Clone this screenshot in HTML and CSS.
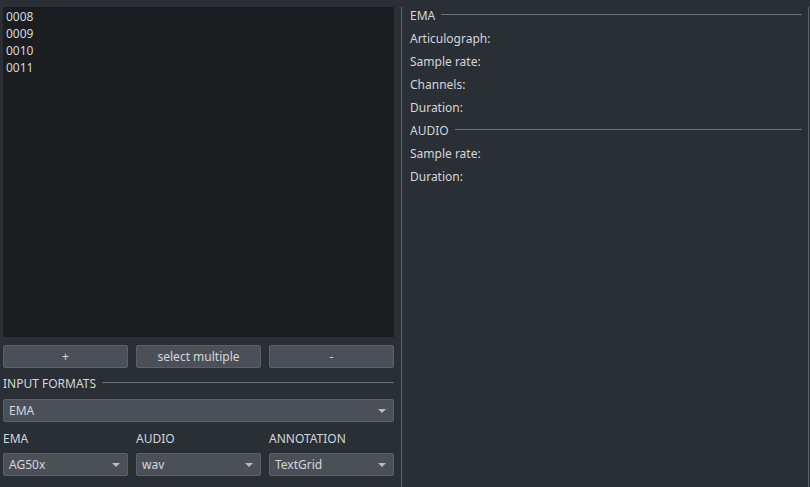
FILE: index.html
```html
<!DOCTYPE html>
<html>
<head>
<meta charset="utf-8">
<link rel="stylesheet" href="styles.css">
</head>
<body>
<div class="app">
  <div class="left">
    <div class="list">
      <div class="item">0008</div>
      <div class="item">0009</div>
      <div class="item">0010</div>
      <div class="item">0011</div>
    </div>
    <div class="buttons">
      <div class="btn">+</div>
      <div class="btn">select multiple</div>
      <div class="btn">-</div>
    </div>
    <div class="section"><span>INPUT FORMATS</span><div class="rule"></div></div>
    <div class="combo wide"><span>EMA</span><i class="arrow"></i></div>
    <div class="formats">
      <div class="col">
        <div class="lbl">EMA</div>
        <div class="combo"><span>AG50x</span><i class="arrow"></i></div>
      </div>
      <div class="col">
        <div class="lbl">AUDIO</div>
        <div class="combo"><span>wav</span><i class="arrow"></i></div>
      </div>
      <div class="col">
        <div class="lbl">ANNOTATION</div>
        <div class="combo"><span>TextGrid</span><i class="arrow"></i></div>
      </div>
    </div>
  </div>
  <div class="right">
    <div class="section hdr first"><span>EMA</span><div class="rule"></div></div>
    <div class="row">Articulograph:</div>
    <div class="row">Sample rate:</div>
    <div class="row">Channels:</div>
    <div class="row">Duration:</div>
    <div class="section hdr"><span>AUDIO</span><div class="rule"></div></div>
    <div class="row">Sample rate:</div>
    <div class="row">Duration:</div>
  </div>
</div>
</body>
</html>
```
FILE: styles.css
```css
* { box-sizing: border-box; }
html, body { margin: 0; padding: 0; }
body {
  width: 810px;
  height: 487px;
  overflow: hidden;
  background: #2a2e35;
  color: #d3d7dc;
  font-family: "Noto Sans", sans-serif;
  font-size: 12px;
}
.app {
  display: flex;
  height: 487px;
  padding-top: 7px;
}
.left {
  width: 401px;
  padding: 0 7px 0 3px;
  display: flex;
  flex-direction: column;
}
.list {
  height: 330px;
  background: #1b1d21;
  padding: 1px 3px;
}
.item {
  height: 17px;
  line-height: 17px;
}
.buttons {
  display: flex;
  gap: 8px;
  margin-top: 8px;
}
.btn {
  flex: 1;
  height: 23px;
  line-height: 21px;
  text-align: center;
  background: #4b5058;
  border: 1px solid #5c6169;
  border-radius: 2px;
}
.section {
  display: flex;
  align-items: center;
  gap: 6px;
  height: 16px;
  margin-top: 7px;
}
.section .rule {
  flex: 1;
  height: 1px;
  background: #6b737d;
  margin-top: -2px;
}
.combo {
  position: relative;
  height: 23px;
  line-height: 21px;
  padding-left: 5px;
  background: #4b5058;
  border: 1px solid #5c6169;
  border-radius: 2px;
  margin-top: 8px;
}
.arrow {
  position: absolute;
  right: 7px;
  top: 9px;
  width: 0;
  height: 0;
  border-left: 4px solid transparent;
  border-right: 4px solid transparent;
  border-top: 4px solid #b8bcc2;
}
.formats {
  display: flex;
  gap: 8px;
  margin-top: 9px;
}
.col { flex: 1; }
.lbl { height: 16px; line-height: 16px; }
.col .combo { margin-top: 6px; }
.right {
  width: 408px;
  border-left: 1px solid #5e646c;
  border-right: 1px solid #5e646c;
  padding: 0 6px 0 8px;
}
.right .hdr { margin-top: 0; height: 23px; }
.right .hdr.first { margin-top: -3px; }
.right .row {
  height: 23px;
  line-height: 23px;
}
```
